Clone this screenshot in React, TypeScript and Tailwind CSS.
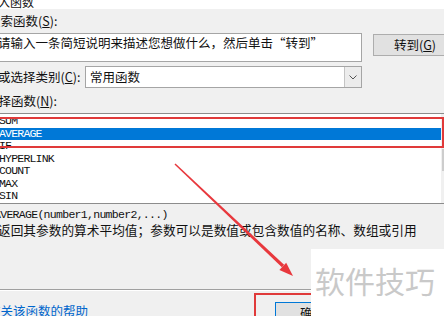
const cjk = "font-['Noto_Sans_CJK_SC','Noto_Sans',sans-serif]";
const mono = "font-['Liberation_Mono','Noto_Sans_CJK_SC',monospace]";

const functions = ["SUM", "AVERAGE", "IF", "HYPERLINK", "COUNT", "MAX", "SIN"];

const Key = ({ k }: { k: string }) => <span className="underline">{k}</span>;

export default function App() {
  return (
    <div className={`relative w-[444px] h-[316px] overflow-hidden bg-[#f0f0f0] text-[#111] ${cjk}`}>
      {/* dialog content, shifted left so the left edge is cropped like the screenshot */}
      <div className="-ml-[14px] w-[520px] flex flex-col">
        {/* title bar, cut at the top */}
        <div className="h-[9px] bg-white overflow-hidden">
          <div className="-mt-[4px] text-[12px] leading-[12px]">插入函数</div>
        </div>

        <div className="mt-[4px] h-[15px] pl-[2px] text-[12.5px] leading-[15px]">
          搜索函数(<Key k="S" />):
        </div>

        <div className="mt-[5px] flex items-start">
          <div className="ml-[8px] w-[368px] h-[29px] bg-white border border-[#a5a5a5] pl-[3px] pt-[1px] text-[12.5px] leading-[15px] whitespace-nowrap">
            请输入一条简短说明来描述您想做什么，然后单击“转到”
          </div>
          <div className="ml-[11px] mt-[1px] w-[84px] h-[22px] bg-[#e1e1e1] border border-[#adadad] flex items-center justify-center text-[12.5px]">
            转到(<Key k="G" />)
          </div>
        </div>

        <div className="mt-[4px] h-[22px] flex items-center">
          <div className="w-[99px] pl-[12px] text-[12.5px] whitespace-nowrap">
            或选择类别(<Key k="C" />):
          </div>
          <div className="w-[277px] h-[22px] bg-white border border-[#a5a5a5] flex items-center">
            <div className="flex-1 pl-[4px] text-[12.5px]">常用函数</div>
            <div className="w-[17px] h-full bg-[#ececec] border-l border-[#c4c4c4] flex items-center justify-center">
              <svg width="8" height="5" viewBox="0 0 8 5">
                <path d="M0.5 0.5 L4 4 L7.5 0.5" fill="none" stroke="#555" strokeWidth="1" />
              </svg>
            </div>
          </div>
        </div>

        <div className="mt-[6px] h-[14px] text-[12.5px] leading-[14px]">
          选择函数(<Key k="N" />):
        </div>

        {/* function list */}
        <div className="mt-[5px] ml-[6px] w-[500px] h-[91px] border border-[#8c8c8c] bg-white flex">
          <div className={`w-[448px] pt-[1px] ${mono} text-[11.5px] tracking-[-0.8px] leading-[12.5px]`}>
            {functions.map((f) => (
              <div
                key={f}
                className={`h-[12.5px] pl-[6px] ${f === "AVERAGE" ? "bg-[#0078d7] text-white" : "text-[#111]"}`}
              >
                {f}
              </div>
            ))}
          </div>
          <div className="w-[17px] bg-[#f0f0f0]">
            <div className="mt-[35px] ml-[1px] w-[15px] h-[22px] bg-[#cdcdcd]" />
          </div>
        </div>

        <div className={`mt-[5px] h-[12px] pl-[8px] ${mono} text-[11.5px] tracking-[-0.7px] leading-[12px]`}>
          AVERAGE(number1,number2,...)
        </div>
        <div className="mt-[2px] h-[14px] pl-[12px] text-[12.7px] leading-[14px] whitespace-nowrap">
          返回其参数的算术平均值；参数可以是数值或包含数值的名称、数组或引用
        </div>

        <div className="mt-[52px] h-[2px] border-t border-[#a0a0a0] border-b border-b-white" />

        <div className="mt-[11px] flex items-start">
          <div className="w-[289px] pt-[2px] pl-[2px] text-[12.5px] leading-[14px] text-[#0066cc]">
            有关该函数的帮助
          </div>
          <div className="w-[75px] h-[23px] bg-[#e1e1e1] border border-[#0078d7] flex items-center justify-center text-[12.5px]">
            确定
          </div>
          <div className="ml-[6px] w-[75px] h-[23px] bg-[#e1e1e1] border border-[#adadad] flex items-center justify-center text-[12.5px]">
            取消
          </div>
        </div>
      </div>

      {/* annotations */}
      <div className="absolute left-[-10px] top-[117px] w-[454px] h-[31px] border-2 border-[#e03a3a]" />
      <div className="absolute left-[254px] top-[293px] w-[220px] h-[40px] border-2 border-[#e03a3a]" />
      <svg className="absolute inset-0" width="444" height="316" viewBox="0 0 444 316">
        <polygon points="174.5,164.5 175.5,163.5 284.1,264.8 281.9,267.2" fill="#e8383d" />
        <polygon points="293,276 279.4,270 286.2,262.8" fill="#e8383d" />
      </svg>

      {/* watermark */}
      <div className="absolute left-[311px] top-[249px] w-[133px] h-[67px] bg-white pt-[16px] pl-[4px]">
        <div className="text-[30px] leading-[30px] text-[#c9c9c9] whitespace-nowrap">软件技巧</div>
      </div>
    </div>
  );
}
